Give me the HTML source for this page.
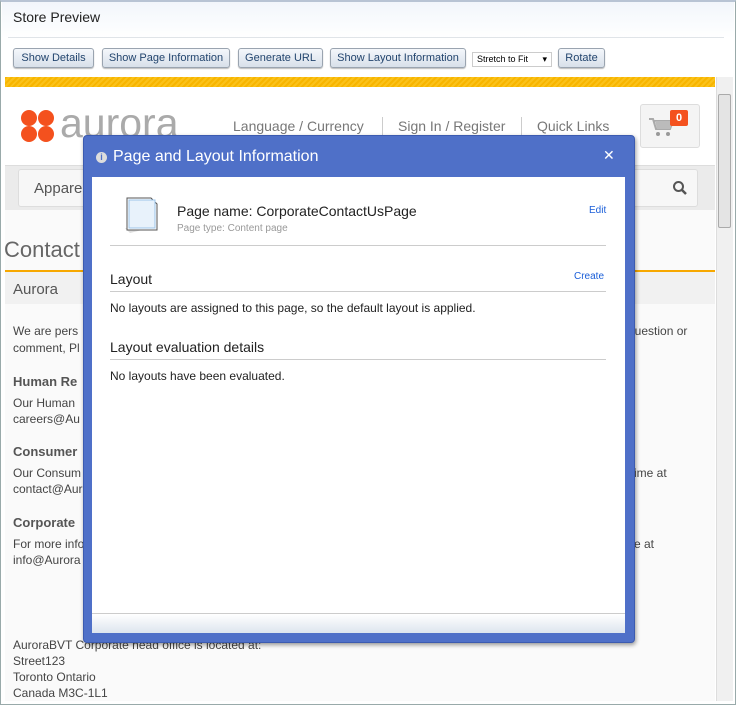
<!DOCTYPE html>
<html><head><style>
*{margin:0;padding:0;box-sizing:border-box}
body{width:736px;height:705px;overflow:hidden;background:#fff;font-family:"Liberation Sans",sans-serif;position:relative;color:#333}
.a{position:absolute}
.btn{position:absolute;top:48px;height:20px;border:1px solid #9aa4b0;border-radius:3px;background:linear-gradient(#f4f7fb,#d8e0ea);font-size:11px;color:#23456e;line-height:18px;text-align:center;box-shadow:0 1px 1px #bbb}
.t{position:absolute;font-size:12px;color:#444;white-space:nowrap}
.h{position:absolute;font-size:13px;font-weight:bold;color:#555}
</style></head><body>
<div class="a" style="left:0;top:0;width:736px;height:705px;border:1px solid #9aa;border-top:2px solid #b8c4d4"></div>
<div class="a" style="left:2px;top:2px;width:732px;height:36px;background:linear-gradient(#f2f6fb,#fff)"></div>
<div class="t" style="left:13px;top:9px;font-size:14px;color:#222">Store Preview</div>
<div class="a" style="left:8px;top:37px;width:716px;height:1px;background:#e0e4e8"></div>
<div class="btn" style="left:13px;width:81px">Show Details</div>
<div class="btn" style="left:102px;width:128px">Show Page Information</div>
<div class="btn" style="left:238px;width:85px">Generate URL</div>
<div class="btn" style="left:330px;width:136px">Show Layout Information</div>
<div class="a" style="left:472px;top:52px;width:80px;height:15px;border:1px solid #ccc;background:#fff;font-size:9px;line-height:13px;padding-left:4px;color:#000">Stretch to Fit <span style="position:absolute;right:4px;top:0">▾</span></div>
<div class="btn" style="left:558px;width:47px">Rotate</div>
<div class="a" style="left:5px;top:77px;width:710px;height:10px;background:repeating-linear-gradient(135deg,#f7b500 0 2px,#fbc21a 2px 4px)"></div>
<div class="a" style="left:716px;top:77px;width:17px;height:624px;background:#f0f0f0;border-left:1px solid #ddd"></div>
<div class="a" style="left:718px;top:94px;width:13px;height:134px;background:#e4e4e4;border:1px solid #aaa;border-radius:2px"></div>
<div class="a" style="left:5px;top:87px;width:710px;height:78px;background:#fff"></div>
<svg class="a" style="left:21px;top:110px" width="34" height="32"><g fill="#f4511e"><circle cx="8" cy="8" r="8"/><circle cx="25" cy="8" r="8"/><circle cx="8" cy="24" r="8"/><circle cx="25" cy="24" r="8"/></g></svg>
<div class="t" style="left:60px;top:100px;font-size:41px;color:#aaa">aurora</div>
<div class="t" style="left:233px;top:118px;font-size:14px;color:#777">Language / Currency</div>
<div class="a" style="left:382px;top:117px;width:1px;height:18px;background:#ccc"></div>
<div class="t" style="left:398px;top:118px;font-size:14px;color:#777">Sign In / Register</div>
<div class="a" style="left:521px;top:117px;width:1px;height:18px;background:#ccc"></div>
<div class="t" style="left:537px;top:118px;font-size:14px;color:#777">Quick Links</div>
<div class="a" style="left:640px;top:104px;width:60px;height:44px;border:1px solid #ddd;border-radius:3px;background:#f4f4f4"></div>
<svg class="a" style="left:648px;top:116px" width="28" height="22"><path d="M1 3H5L8 13H22L25 5H6" fill="none" stroke="#aaa" stroke-width="2"/><path d="M7 5H25L22 13H9Z" fill="#bbb"/><circle cx="10" cy="18" r="2" fill="#999"/><circle cx="20" cy="18" r="2" fill="#999"/></svg>
<div class="a" style="left:670px;top:110px;width:18px;height:16px;background:#f4511e;color:#fff;font-size:11px;font-weight:bold;text-align:center;line-height:16px;border-radius:2px">0</div>
<div class="a" style="left:5px;top:165px;width:710px;height:45px;background:#ebebeb;border-top:1px solid #ddd"></div>
<div class="a" style="left:18px;top:169px;width:680px;height:38px;background:#f7f7f7;border:1px solid #ddd;border-radius:3px"></div>
<div class="t" style="left:34px;top:180px;font-size:15px;color:#555">Apparel</div>
<svg class="a" style="left:672px;top:180px" width="16" height="16"><circle cx="6.5" cy="6.5" r="4.5" fill="none" stroke="#555" stroke-width="2"/><path d="M10 10L14 14" stroke="#555" stroke-width="2.5"/></svg>
<div class="a" style="left:5px;top:210px;width:710px;height:491px;background:#fafafa"></div>
<div class="t" style="left:4px;top:237px;font-size:22px;color:#666">Contact</div>
<div class="a" style="left:5px;top:270px;width:710px;height:2px;background:#f7a800"></div>
<div class="a" style="left:5px;top:272px;width:710px;height:32px;background:#f1f1f1"></div>
<div class="t" style="left:13px;top:281px;font-size:15px;color:#555">Aurora</div>
<div class="t" style="left:13px;top:324px">We are pers</div><div class="t" style="left:628px;top:324px">question or</div>
<div class="t" style="left:13px;top:341px">comment, Pl</div>
<div class="h" style="left:13px;top:374px">Human Re</div>
<div class="t" style="left:13px;top:396px">Our Human</div><div class="t" style="left:13px;top:412px">careers@Au</div>
<div class="h" style="left:13px;top:444px">Consumer</div>
<div class="t" style="left:13px;top:466px">Our Consum</div><div class="t" style="left:634px;top:466px">ime at</div>
<div class="t" style="left:13px;top:482px">contact@Aur</div>
<div class="h" style="left:13px;top:515px">Corporate</div>
<div class="t" style="left:13px;top:537px">For more info</div><div class="t" style="left:634px;top:537px">e at</div>
<div class="t" style="left:13px;top:553px">info@Aurora</div>
<div class="t" style="left:13px;top:638px">AuroraBVT Corporate head office is located at:</div>
<div class="t" style="left:13px;top:654px">Street123</div>
<div class="t" style="left:13px;top:670px">Toronto Ontario</div>
<div class="t" style="left:13px;top:686px">Canada M3C-1L1</div>
<div class="a" style="left:83px;top:135px;width:552px;height:508px;background:#4f70c8;border:1px solid #3c5bb0;border-radius:4px;box-shadow:1px 2px 4px rgba(0,0,0,.4)"></div>
<div class="a" style="left:96px;top:152px;width:11px;height:11px;border-radius:50%;background:#ddd;color:#4f70c8;font-size:9px;font-weight:bold;text-align:center;line-height:11px">i</div>
<div class="t" style="left:113px;top:148px;font-size:16px;color:#fff">Page and Layout Information</div>
<div class="t" style="left:603px;top:147px;font-size:14px;color:#fff">✕</div>
<div class="a" style="left:92px;top:177px;width:533px;height:456px;background:#fff"></div>
<div class="a" style="left:92px;top:613px;width:533px;height:20px;background:linear-gradient(#fff,#dde5ee);border-top:1px solid #ccc"></div>
<svg class="a" style="left:120px;top:196px" width="40" height="38"><path d="M10 37 L5 32 L30 32Z" fill="#ddd"/><path d="M7 2H31L37 8V34H7Z" fill="#fff" stroke="#555"/><rect x="9" y="4" width="26" height="28" fill="#e8f2fb" stroke="#9cc4e8"/></svg>
<div class="t" style="left:177px;top:203px;font-size:14px;color:#222">Page name: CorporateContactUsPage</div>
<div class="t" style="left:177px;top:223px;font-size:10px;color:#999">Page type: Content page</div>
<div class="t" style="left:589px;top:205px;font-size:10px;color:#1a5ed8">Edit</div>
<div class="a" style="left:110px;top:245px;width:496px;height:1px;background:#ccc"></div>
<div class="t" style="left:110px;top:271px;font-size:14px;color:#222">Layout</div>
<div class="t" style="left:574px;top:271px;font-size:10px;color:#1a5ed8">Create</div>
<div class="a" style="left:110px;top:291px;width:496px;height:1px;background:#ccc"></div>
<div class="t" style="left:110px;top:301px;font-size:12px;color:#222">No layouts are assigned to this page, so the default layout is applied.</div>
<div class="t" style="left:110px;top:339px;font-size:14px;color:#222">Layout evaluation details</div>
<div class="a" style="left:110px;top:359px;width:496px;height:1px;background:#ccc"></div>
<div class="t" style="left:110px;top:369px;font-size:12px;color:#222">No layouts have been evaluated.</div>
</body></html>
